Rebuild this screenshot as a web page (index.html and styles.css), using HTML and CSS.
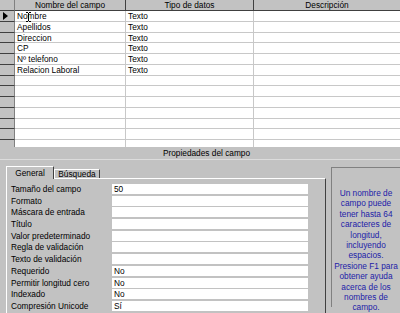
FILE: index.html
```html
<!DOCTYPE html>
<html lang="es">
<head>
    <meta charset="UTF-8">
    <title>Tabla: Vista Diseño</title>
    <link rel="stylesheet" href="styles.css">
</head>
<body>
    <div class="grid">
        <div class="grid-row grid-head">
            <div class="sel"></div>
            <div class="cell c-name">Nombre del campo</div>
            <div class="cell c-type">Tipo de datos</div>
            <div class="cell c-desc">Descripción</div>
        </div>
        <div class="grid-row">
            <div class="sel">
                <svg class="arrow" width="6" height="8" viewBox="0 0 6 8"><path d="M0 0L5 4L0 8Z" fill="#000"/></svg>
            </div>
            <div class="cell c-name">Nombre</div>
            <div class="cell c-type">Texto</div>
            <div class="cell c-desc"></div>
        </div>
        <div class="grid-row">
            <div class="sel"></div>
            <div class="cell c-name">Apellidos</div>
            <div class="cell c-type">Texto</div>
            <div class="cell c-desc"></div>
        </div>
        <div class="grid-row">
            <div class="sel"></div>
            <div class="cell c-name">Direccion</div>
            <div class="cell c-type">Texto</div>
            <div class="cell c-desc"></div>
        </div>
        <div class="grid-row">
            <div class="sel"></div>
            <div class="cell c-name">CP</div>
            <div class="cell c-type">Texto</div>
            <div class="cell c-desc"></div>
        </div>
        <div class="grid-row">
            <div class="sel"></div>
            <div class="cell c-name">Nº telefono</div>
            <div class="cell c-type">Texto</div>
            <div class="cell c-desc"></div>
        </div>
        <div class="grid-row">
            <div class="sel"></div>
            <div class="cell c-name">Relacion Laboral</div>
            <div class="cell c-type">Texto</div>
            <div class="cell c-desc"></div>
        </div>
        <div class="grid-row"><div class="sel"></div><div class="cell c-name"></div><div class="cell c-type"></div><div class="cell c-desc"></div></div>
        <div class="grid-row"><div class="sel"></div><div class="cell c-name"></div><div class="cell c-type"></div><div class="cell c-desc"></div></div>
        <div class="grid-row"><div class="sel"></div><div class="cell c-name"></div><div class="cell c-type"></div><div class="cell c-desc"></div></div>
        <div class="grid-row"><div class="sel"></div><div class="cell c-name"></div><div class="cell c-type"></div><div class="cell c-desc"></div></div>
        <div class="grid-row"><div class="sel"></div><div class="cell c-name"></div><div class="cell c-type"></div><div class="cell c-desc"></div></div>
        <div class="grid-row"><div class="sel"></div><div class="cell c-name"></div><div class="cell c-type"></div><div class="cell c-desc"></div></div>
        <div class="grid-row"><div class="sel"></div><div class="cell c-name"></div><div class="cell c-type"></div><div class="cell c-desc"></div></div>

        <!-- cursor del ratón sobre "Nombre" -->
        <svg class="ibeam" width="5" height="10" viewBox="0 0 5 10">
            <path d="M0 0.5H2M3 0.5H5M2.5 1V9M0 9.5H2M3 9.5H5" stroke="#000" stroke-width="1" fill="none"/>
        </svg>
    </div>

    <div class="props-bar">Propiedades del campo</div>

    <div class="props-pane">
        <div class="tab-area">
            <div class="tabs">
                <div class="tab active">General</div>
                <div class="tab">Búsqueda</div>
            </div>
            <div class="panel">
                <div class="prop"><span class="prop-label">Tamaño del campo</span><span class="prop-value">50</span></div>
                <div class="prop"><span class="prop-label">Formato</span><span class="prop-value"></span></div>
                <div class="prop"><span class="prop-label">Máscara de entrada</span><span class="prop-value"></span></div>
                <div class="prop"><span class="prop-label">Título</span><span class="prop-value"></span></div>
                <div class="prop"><span class="prop-label">Valor predeterminado</span><span class="prop-value"></span></div>
                <div class="prop"><span class="prop-label">Regla de validación</span><span class="prop-value"></span></div>
                <div class="prop"><span class="prop-label">Texto de validación</span><span class="prop-value"></span></div>
                <div class="prop"><span class="prop-label">Requerido</span><span class="prop-value">No</span></div>
                <div class="prop"><span class="prop-label">Permitir longitud cero</span><span class="prop-value">No</span></div>
                <div class="prop"><span class="prop-label">Indexado</span><span class="prop-value">No</span></div>
                <div class="prop"><span class="prop-label">Compresión Unicode</span><span class="prop-value">Sí</span></div>
            </div>
        </div>
        <div class="help">
            Un nombre de<br>campo puede<br>tener hasta 64<br>caracteres de<br>longitud,<br>incluyendo<br>espacios.<br>Presione F1 para<br>obtener ayuda<br>acerca de los<br>nombres de<br>campo.
        </div>
    </div>
</body>
</html>
```

FILE: styles.css
```css
:root {
    --face: #c2c2c2;
    --shadow: #808080;
    --dark: #404040;
    --light: #ffffff;
    --line: #c8c8c8;
    --help-text: #1c1ca8;
}

body {
    margin: 0;
    width: 400px;
    height: 313px;
    overflow: hidden;
    background-color: var(--face);
    font-family: 'Liberation Sans', Arial, sans-serif;
    font-size: 8.3px;
    color: #000;
}

/* cuadrícula de campos */
.grid {
    position: relative;
    height: 147px;
    overflow: hidden;
    background-color: #fff;
}

.grid-row {
    display: flex;
    height: 10.75px;
}

.grid-head {
    height: 11px;
}

.sel {
    width: 15px;
    flex: none;
    box-sizing: border-box;
    background-color: var(--face);
    border-right: 1px solid var(--shadow);
    border-bottom: 1px solid var(--dark);
    position: relative;
}

.cell {
    box-sizing: border-box;
    padding-left: 2px;
    line-height: 10px;
    white-space: nowrap;
    overflow: hidden;
    border-right: 1px solid var(--line);
    border-bottom: 1px solid var(--line);
}

.c-name { width: 111px; flex: none; }
.c-type { width: 128px; flex: none; }
.c-desc { flex: 1; border-right: none; }

.grid-head .cell {
    background-color: var(--face);
    text-align: center;
    padding-left: 0;
    border-right: 1px solid var(--dark);
    border-bottom: 1px solid var(--dark);
}

.grid-head .c-desc {
    border-right: none;
}

.arrow {
    position: absolute;
    left: 3px;
    top: 1px;
}

.ibeam {
    position: absolute;
    left: 26px;
    top: 12px;
}

/* barra de propiedades */
.props-bar {
    height: 13px;
    box-sizing: border-box;
    padding-left: 13px;
    line-height: 12px;
    text-align: center;
    border-bottom: 1px solid #dcdcdc;
}

.props-pane {
    display: flex;
    padding-top: 6px;
    height: 147px;
    box-sizing: border-box;
}

.tab-area {
    width: 320px;
    margin-left: 6px;
    flex: none;
}

.tabs {
    display: flex;
    align-items: flex-end;
    height: 12px;
}

.tab {
    box-sizing: border-box;
    height: 9px;
    width: 46px;
    line-height: 9px;
    text-align: center;
    border-top: 1px solid var(--light);
    border-left: 1px solid var(--light);
    border-right: 1px solid var(--dark);
}

.tab.active {
    width: 48px;
    height: 13px;
    line-height: 12px;
    margin-bottom: -1px;
    position: relative;
    background-color: var(--face);
}

.panel {
    height: 140px;
    box-sizing: border-box;
    padding: 5px 17px 0 4px;
    border-top: 1px solid var(--light);
    border-left: 1px solid var(--light);
    border-right: 1px solid var(--dark);
}

.prop {
    display: flex;
    height: 11.7px;
}

.prop-label {
    width: 101px;
    flex: none;
    line-height: 10px;
    white-space: nowrap;
}

.prop-value {
    flex: 1;
    height: 10px;
    line-height: 10px;
    padding-left: 2px;
    background-color: #fff;
}

/* ayuda contextual */
.help {
    flex: 1;
    margin: 1px 0 0 5px;
    padding-top: 20px;
    border-top: 1px solid var(--shadow);
    border-left: 1px solid var(--shadow);
    color: var(--help-text);
    text-align: center;
    line-height: 10.4px;
    white-space: nowrap;
}
```
